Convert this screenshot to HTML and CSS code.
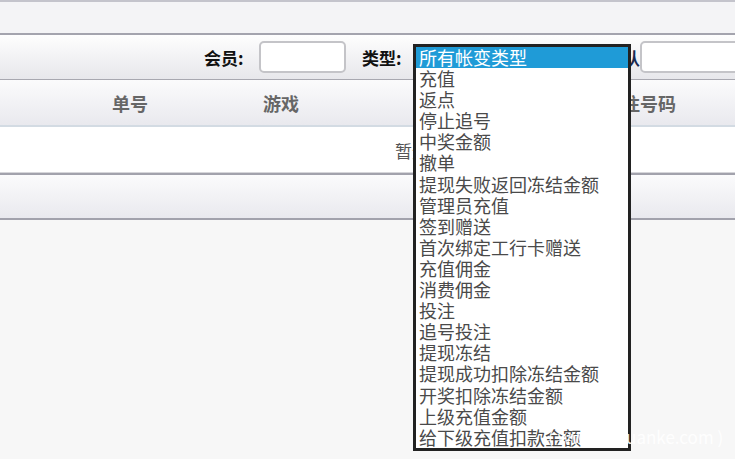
FILE: index.html
```html
<!DOCTYPE html>
<html lang="zh-CN">

<head>
    <meta charset="UTF-8">
    <title>帐变记录</title>
    <link rel="stylesheet" href="styles.css">
</head>

<body>
    <div class="top-band"></div>

    <form class="search-bar" action="#">
        <label class="search-label">会员:</label>
        <input class="search-input" type="text">
        <label class="search-label type-label">类型:</label>
        <div class="type-select">所有帐变类型</div>
        <label class="search-label team-label"><span>团队</span></label>
        <input class="search-input wide-input" type="text">
    </form>

    <div class="record-table">
        <div class="table-head">
            <div class="col"></div>
            <div class="col">单号</div>
            <div class="col">游戏</div>
            <div class="col">玩法</div>
            <div class="col">期号</div>
            <div class="col">投注号码</div>
            <div class="col">金额</div>
        </div>
        <div class="table-empty">暂无数据</div>
        <div class="table-foot"></div>
    </div>

    <ul class="type-list">
        <li class="selected">所有帐变类型</li>
        <li>充值</li>
        <li>返点</li>
        <li>停止追号</li>
        <li>中奖金额</li>
        <li>撤单</li>
        <li>提现失败返回冻结金额</li>
        <li>管理员充值</li>
        <li>签到赠送</li>
        <li>首次绑定工行卡赠送</li>
        <li>充值佣金</li>
        <li>消费佣金</li>
        <li>投注</li>
        <li>追号投注</li>
        <li>提现冻结</li>
        <li>提现成功扣除冻结金额</li>
        <li>开奖扣除冻结金额</li>
        <li>上级充值金额</li>
        <li>给下级充值扣款金额</li>
    </ul>

    <p class="source-note">( www.yiquanke.com )</p>
</body>

</html>
```

FILE: styles.css
```css
* {
    padding: 0;
    margin: 0;
    box-sizing: border-box;
}

body {
    background-color: #f7f7f7;
    font-family: "Noto Sans CJK SC", "Noto Sans", sans-serif;
    overflow: hidden;
    width: 735px;
    height: 459px;
    position: relative;
}

.top-band {
    height: 35px;
    border-top: 2px solid #c4c4cc;
    border-bottom: 2px solid #a4a4ae;
    background-color: #f4f4f6;
}

.search-bar {
    display: flex;
    align-items: center;
    height: 45px;
    padding-left: 204px;
    border-bottom: 1px solid #a8a8b0;
    background-image: linear-gradient(#fefefe, #e7e7eb);
    white-space: nowrap;
}

.search-label {
    font-size: 17px;
    font-weight: bold;
    color: #111;
    width: 55px;
    flex-shrink: 0;
}

.search-input {
    width: 87px;
    height: 32px;
    flex-shrink: 0;
    border: 2px solid #c4c4c8;
    border-radius: 5px;
    background-color: #fff;
}

.type-label {
    margin-left: 16px;
    width: 51px;
}

.type-select {
    width: 218px;
    font-size: 16px;
    flex-shrink: 0;
}

.team-label {
    width: 9px;
    overflow: hidden;
    display: flex;
    justify-content: flex-end;
    color: #1a2a50;
}

.team-label span {
    flex-shrink: 0;
}

.wide-input {
    margin-left: 0;
    width: 200px;
}

.record-table {
    width: 858px;
}

.table-head {
    display: grid;
    grid-template-columns: 55px 150px 152px 150px 68px 130px 1fr;
    align-items: center;
    height: 47px;
    border-bottom: 2px solid #d3dbe3;
    background-image: linear-gradient(#fbfbfc, #e9e9ee);
}

.col {
    text-align: center;
    font-size: 18px;
    font-weight: bold;
    color: #666;
}

.table-empty {
    height: 48px;
    display: flex;
    align-items: center;
    justify-content: center;
    font-size: 17px;
    color: #555;
    background-color: #fff;
    border-bottom: 2px solid #a2a2ac;
    box-shadow: inset 0 -1px 0 #d6d6da;
}

.table-foot {
    height: 45px;
    border-bottom: 2px solid #a2a2ac;
    background-image: linear-gradient(#fbfbfc, #e9e9ee);
}

/* open dropdown of the type select */
.type-list {
    position: absolute;
    left: 413px;
    top: 44px;
    width: 218px;
    height: 407px;
    list-style: none;
    border: 3px solid #222;
    background-color: #fff;
}

.type-list li {
    height: 21.1px;
    line-height: 21px;
    padding-left: 3px;
    font-size: 18px;
    color: #4a4a4a;
    white-space: nowrap;
}

.type-list .selected {
    background-color: #1f9bd7;
    color: #fff;
}

/* faint source mark over the page corner */
.source-note {
    position: absolute;
    left: 548px;
    top: 427px;
    font-size: 17px;
    line-height: 20px;
    color: rgba(255, 255, 255, 0.9);
    white-space: nowrap;
}
```
